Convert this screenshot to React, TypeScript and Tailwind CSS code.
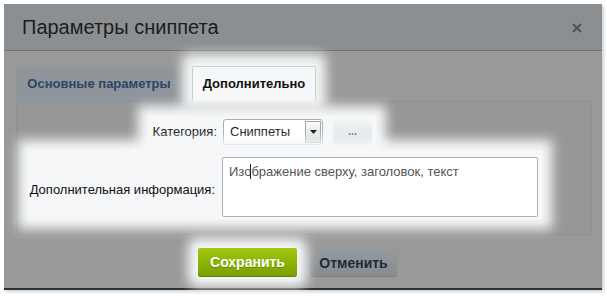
import React from "react";

export default function App() {
  return (
    <div
      className="w-[607px] h-[296px] bg-white pt-[4px] pl-[4px] overflow-hidden"
      style={{ fontFamily: '"Liberation Sans", Arial, sans-serif' }}
    >
      <div className="w-[598px] h-[286px] flex flex-col bg-[#999999] border-b-2 border-[#26323c] shadow-[2px_2px_3px_rgba(0,0,0,0.18)]">
        {/* header */}
        <div className="h-[47px] shrink-0 flex items-center justify-between bg-[#8b8f92] border-b border-[#6f7376] pl-[18px] pr-[20px]">
          <span className="text-[20px] text-[#1c1c1c] leading-none">Параметры сниппета</span>
          <svg width="10" height="10" viewBox="0 0 10 10" className="mt-[2px]">
            <path d="M1 1 L9 9 M9 1 L1 9" stroke="#4b5260" strokeWidth="2" />
          </svg>
        </div>

        {/* body */}
        <div className="flex flex-col pt-[15px] pl-[12px] pr-[10px]">
          {/* tabs */}
          <div className="flex items-end gap-[10px] h-[35px]">
            <div className="h-[34px] w-[166px] flex items-center justify-center bg-[#8f959a] rounded-t-[2px] text-[13px] font-bold text-[#2c4467] whitespace-nowrap">
              Основные параметры
            </div>
            <div className="relative z-10 h-[35px] w-[124px] flex items-center justify-center bg-[#f5f7f8] border border-b-0 border-[#c9d1d5] rounded-t-[2px] text-[13px] font-bold text-[#111] whitespace-nowrap shadow-[0_-2px_12px_10px_rgba(246,248,249,0.97)]">
              Дополнительно
            </div>
          </div>

          {/* panel */}
          <div className="h-[134px] bg-[#979797] border border-[#8b9397] pt-[14px] pb-[15px] flex flex-col">
            {/* category row */}
            <div className="relative z-10 ml-[131px] w-[228px] h-[32px] flex items-center pl-[4px] bg-[#f5f7f8] shadow-[0_0_11px_10px_#f5f7f8]">
              <div className="w-[65px] flex justify-end">
                <span className="text-[13px] text-[#111] whitespace-nowrap">Категория:</span>
              </div>
              <div className="ml-[6px] w-[100px] h-[26px] flex items-center bg-white border border-[#a9afb4] rounded-[3px] overflow-hidden">
                <span className="flex-1 pl-[6px] text-[13px] text-[#111] whitespace-nowrap">Сниппеты</span>
                <div className="w-[16px] h-[22px] mr-[1px] flex items-center justify-center border border-[#a0a6aa] bg-gradient-to-b from-[#fafafa] to-[#d6d9db]">
                  <svg width="7" height="4" viewBox="0 0 7 4">
                    <path d="M0 0 L7 0 L3.5 4 Z" fill="#111" />
                  </svg>
                </div>
              </div>
              <div className="ml-[10px] w-[39px] h-[26px] flex items-end justify-center rounded-[3px] bg-gradient-to-b from-[#f3f5f6] to-[#dde1e4] text-[11px] font-bold text-[#56606a] leading-none pb-[8px]">
                ...
              </div>
            </div>

            {/* info row */}
            <div className="relative z-10 mt-[2px] ml-[11px] w-[514px] h-[69px] flex items-start pt-[7px] pl-[7px] bg-[#f5f7f8] shadow-[0_0_11px_10px_#f5f7f8]">
              <div className="w-[180px] mt-[23px] flex justify-end">
                <span className="text-[13px] text-[#111] whitespace-nowrap">Дополнительная информация:</span>
              </div>
              <div className="ml-[7px] w-[316px] h-[60px] bg-white border border-[#aab0b5] rounded-[2px] pl-[6px] pt-[6px] text-[13px] text-[#555] leading-[16px] whitespace-nowrap">
                Изо<span className="border-l border-[#222] -ml-[1px]"></span>бражение сверху, заголовок, текст
              </div>
            </div>
          </div>

          {/* buttons */}
          <div className="flex items-end gap-[13px] pl-[182px] mt-[13px]">
            <div className="relative z-10 w-[99px] h-[29px] flex items-center justify-center rounded-[3px] bg-gradient-to-b from-[#a2c60f] to-[#78a000] border-b border-[#5f7f00] text-[14px] font-bold text-white shadow-[0_0_12px_10px_#f6f8f9] [text-shadow:0_1px_0_rgba(0,0,0,0.25)]">
              Сохранить
            </div>
            <div className="w-[87px] h-[27px] flex items-center justify-center rounded-[3px] bg-gradient-to-b from-[#949a9d] to-[#868c8f] border-b border-[#7a7f82] text-[14px] font-bold text-[#1f2a33]">
              Отменить
            </div>
          </div>
        </div>
      </div>
    </div>
  );
}
